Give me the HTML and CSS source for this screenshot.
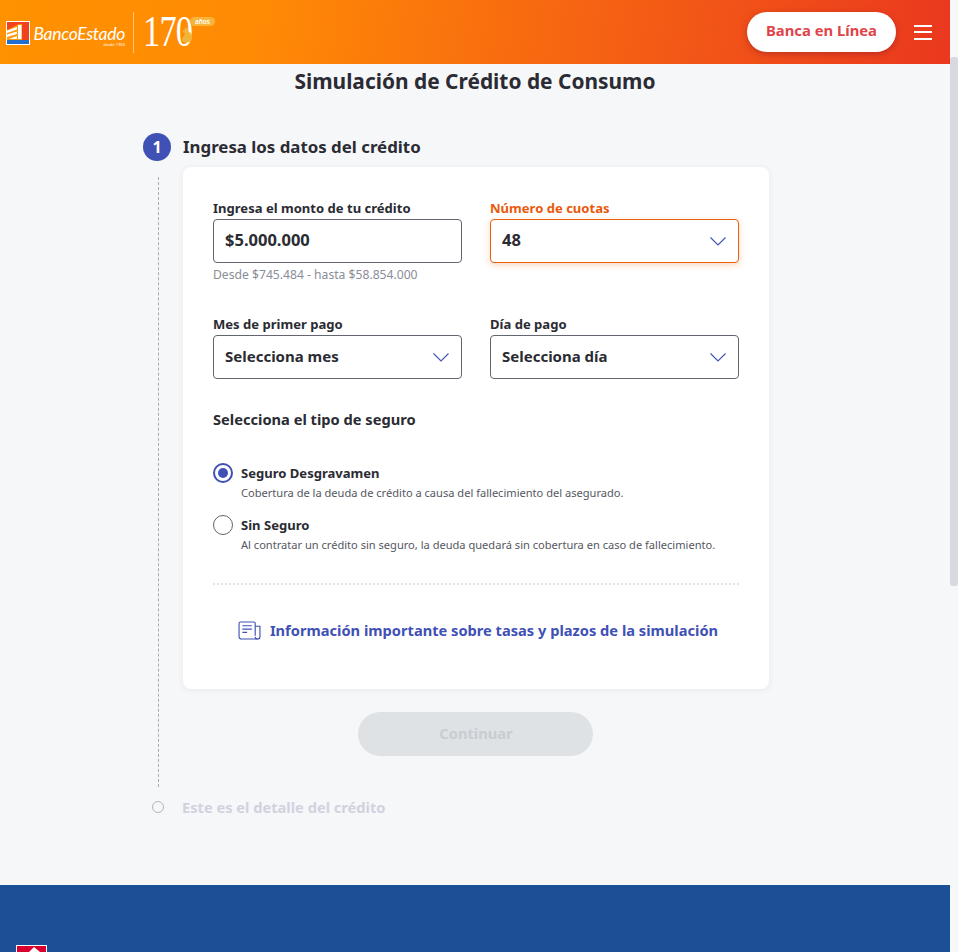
FILE: index.html

```html
<!DOCTYPE html>
<html lang="es">
<head>
    <meta charset="UTF-8">
    <title>Simulación de Crédito de Consumo</title>
    <link rel="stylesheet" href="styles.css">
</head>
<body>
    <div class="page">
        <div class="content">
            <header class="topbar">
                <div class="brand">
                    <svg class="brand-mark" viewBox="0 0 24 24" width="24" height="24">
                        <rect width="24" height="24" fill="#fff"/>
                        <rect x="1" y="1" width="22" height="18" fill="#f0421f"/>
                        <rect x="1" y="19" width="22" height="4" fill="#1f6fd0"/>
                        <path d="M1 9 L13 3 L16 3 L16 19 L1 19 Z" fill="#ff9a10"/>
                        <path d="M1 9.500 L11 6 L11 8.500 L1 12 Z M1 13.500 L11 10.500 L11 13 L1 16 Z M3 18 L11 15 L11 18 Z M12 4 L15.500 4 L15.500 18 L12 18 Z" fill="#fff"/>
                    </svg>
                    <div class="brand-text">
                        <span class="brand-name">BancoEstado</span>
                        <span class="brand-since">desde 1953</span>
                    </div>
                    <span class="brand-line"></span>
                    <span class="years">170</span>
                    <svg class="years-bird" viewBox="0 0 12 16" width="13" height="17">
                        <path d="M5 1 C7 0 8 2 7.500 4 C10 5 12 8 11 11 C10 15 4 16 2 13 C1 11 3 9 4 8 C5 6 4 5 2 5 C3 3 4 2 5 1 Z" fill="#f2b33d"/>
                    </svg>
                    <span class="years-tag">años</span>
                </div>
                <div class="topbar-actions">
                    <a class="btn-online">Banca en Línea</a>
                    <div class="burger"><span></span><span></span><span></span></div>
                </div>
            </header>

            <main class="main">
                <h1 class="title">Simulación de Crédito de Consumo</h1>

                <div class="step-head">
                    <span class="step-num">1</span>
                    <h2>Ingresa los datos del crédito</h2>
                </div>

                <div class="step-body">
                    <section class="card">
                        <div class="form-grid">
                            <div class="field">
                                <label>Ingresa el monto de tu crédito</label>
                                <div class="box num">$5.000.000</div>
                                <small>Desde $745.484 - hasta $58.854.000</small>
                            </div>
                            <div class="field active">
                                <label>Número de cuotas</label>
                                <div class="box num">48
                                    <svg class="chev" viewBox="0 0 16 9" width="16" height="9"><path d="M.5.5 8 8 15.5.5" fill="none" stroke="#3f51b5" stroke-width="1.1"/></svg>
                                </div>
                            </div>
                            <div class="field">
                                <label>Mes de primer pago</label>
                                <div class="box">Selecciona mes
                                    <svg class="chev" viewBox="0 0 16 9" width="16" height="9"><path d="M.5.5 8 8 15.5.5" fill="none" stroke="#3f51b5" stroke-width="1.1"/></svg>
                                </div>
                            </div>
                            <div class="field">
                                <label>Día de pago</label>
                                <div class="box">Selecciona día
                                    <svg class="chev" viewBox="0 0 16 9" width="16" height="9"><path d="M.5.5 8 8 15.5.5" fill="none" stroke="#3f51b5" stroke-width="1.1"/></svg>
                                </div>
                            </div>
                        </div>

                        <h3 class="insurance-title">Selecciona el tipo de seguro</h3>

                        <div class="radio on">
                            <span class="radio-dot"></span>
                            <div>
                                <strong>Seguro Desgravamen</strong>
                                <p>Cobertura de la deuda de crédito a causa del fallecimiento del asegurado.</p>
                            </div>
                        </div>
                        <div class="radio">
                            <span class="radio-dot"></span>
                            <div>
                                <strong>Sin Seguro</strong>
                                <p>Al contratar un crédito sin seguro, la deuda quedará sin cobertura en caso de fallecimiento.</p>
                            </div>
                        </div>

                        <a class="info-link">
                            <svg viewBox="0 0 24 20" width="23" height="19" fill="none" stroke="#3f51b5" stroke-width="1.2">
                                <path d="M18 15.500V2.500A1.500 1.500 0 0 0 16.500 1H2.500A1.500 1.500 0 0 0 1 2.500V16.500A2.500 2.500 0 0 0 3.500 19H20.500A2.500 2.500 0 0 0 23 16.500V5.500H18"/>
                                <path d="M18 16.500A2.500 2.500 0 0 0 20.500 19M4.500 5H14.500M4.500 8.500H14.500M4.500 12H9.500"/>
                            </svg>
                            <span>Información importante sobre tasas y plazos de la simulación</span>
                        </a>
                    </section>
                    <div class="actions"><button class="btn-next">Continuar</button></div>
                </div>

                <div class="step-next">
                    <span class="step-ring"></span>
                    <span>Este es el detalle del crédito</span>
                </div>
            </main>

            <footer class="footer">
                <svg viewBox="0 0 31 31" width="31" height="31">
                    <rect width="31" height="31" fill="#fff"/>
                    <rect x="1" y="1" width="29" height="29" fill="#d9002f"/>
                    <path d="M10 10 L18 2 L24 7 V12 H10 Z" fill="#fff"/>
                </svg>
            </footer>
        </div>
        <div class="scrollbar"><div class="thumb"></div></div>
    </div>
</body>
</html>
```

FILE: styles.css

```css
* {
    box-sizing: border-box;
}
html, body {
    margin: 0;
    height: 952px;
    overflow: hidden;
}
body {
    font-family: "Noto Sans", Arial, sans-serif;
    background: #f6f7f9;
    color: #2b2b33;
}
.page {
    display: flex;
    height: 952px;
}
.content {
    width: 950px;
    flex: none;
}
.scrollbar {
    width: 8px;
    padding-top: 57px;
}
.thumb {
    height: 529px;
    background: #d8d9df;
    border-radius: 3px;
}

/* header */
.topbar {
    height: 64px;
    background: linear-gradient(100deg, #ff9200 0%, #ff8a05 28%, #f45c15 68%, #ea381f 100%);
    display: flex;
    justify-content: space-between;
    align-items: center;
    padding: 0 18px 0 6px;
}
.brand {
    position: relative;
    display: flex;
    align-items: center;
    height: 64px;
    color: #fff;
}
.brand-mark {
    margin-top: 1px;
}
.brand-text {
    width: 103px;
    padding: 7px 8px 0 3px;
    display: flex;
    flex-direction: column;
    align-items: flex-end;
}
.brand-name {
    font-family: Lato, Arial, sans-serif;
    font-style: italic;
    font-size: 17.500px;
    letter-spacing: -.3px;
    line-height: 17px;
    white-space: nowrap;
}
.brand-since {
    font-size: 4px;
    line-height: 5px;
}
.brand-line {
    width: 1px;
    height: 41px;
    background: #ffc27a;
}
.years {
    font-family: "Liberation Serif", serif;
    font-size: 44px;
    letter-spacing: -1px;
    margin-left: 9px;
    line-height: 1;
    width: 52px;
    transform: scaleX(.78);
    transform-origin: left center;
}
.years-bird {
    position: absolute;
    left: 174px;
    top: 27px;
}
.years-tag {
    position: absolute;
    left: 184px;
    top: 17px;
    width: 25px;
    height: 9px;
    border-radius: 5px;
    background: #f5b53a;
    font-size: 6.500px;
    line-height: 9px;
    text-align: center;
    font-weight: 600;
}
.topbar-actions {
    display: flex;
    align-items: center;
    gap: 18px;
}
.btn-online {
    display: block;
    width: 149px;
    height: 40px;
    line-height: 37px;
    text-align: center;
    background: #fff;
    color: #e0444a;
    border-radius: 20px;
    font-size: 14.800px;
    font-weight: 700;
    box-shadow: 0 2px 6px rgba(150,30,40,.55);
}
.burger {
    width: 18px;
    display: flex;
    flex-direction: column;
    gap: 4.500px;
}
.burger span {
    height: 2px;
    background: #fff;
}

/* main */
.main {
    height: 821px;
}
.title {
    margin: 0;
    height: 36px;
    line-height: 35px;
    text-align: center;
    font-size: 20.900px;
    font-weight: 700;
}
.step-head {
    display: flex;
    align-items: center;
    gap: 12px;
    margin: 33px 0 0 143px;
    height: 28px;
}
.step-head h2 {
    margin: 0 0 2px;
    font-size: 16.850px;
    font-weight: 700;
}
.step-num {
    width: 28px;
    height: 28px;
    border-radius: 50%;
    background: #3f51b5;
    color: #fff;
    text-align: center;
    line-height: 28px;
    font-weight: 700;
    font-size: 16px;
}
.step-body {
    position: relative;
    margin: 6px 0 0 183px;
    width: 586px;
}
.step-body::before {
    content: "";
    position: absolute;
    left: -25px;
    top: 10px;
    bottom: -31px;
    border-left: 1px dashed #a9abb3;
}
.card {
    background: #fff;
    border-radius: 8px;
    height: 522px;
    padding: 30px 30px 0;
    box-shadow: 0 1px 6px rgba(40,50,80,.08);
}
.form-grid {
    display: grid;
    grid-template-columns: 249px 249px;
    grid-template-rows: 86px 54px;
    column-gap: 28px;
    row-gap: 30px;
}
.field label {
    display: block;
    font-size: 13.050px;
    font-weight: 700;
    line-height: 22px;
}
.box {
    height: 44px;
    border: 1px solid #63656f;
    border-radius: 4px;
    padding: 0 11px 2px;
    display: flex;
    align-items: center;
    justify-content: space-between;
    font-size: 15px;
    font-weight: 700;
    background: #fff;
}
.box.num {
    font-size: 16.500px;
    padding-bottom: 4px;
}
.box.num .chev {
    margin-top: 4px;
}
.chev {
    margin: 2px 1px 0 0;
}
.field small {
    display: block;
    margin-top: 4px;
    font-size: 12.150px;
    line-height: 16px;
    color: #8a8d98;
}
.field.active label {
    color: #e8590c;
}
.field.active .box {
    border-color: #e8610f;
    box-shadow: 0 2px 6px rgba(240,120,30,.3);
}
.insurance-title {
    margin: 42px 0 0;
    font-size: 14.650px;
    font-weight: 700;
    line-height: 20px;
}
.radio {
    display: flex;
    gap: 8px;
    height: 52px;
}
.insurance-title + .radio {
    margin-top: 34px;
}
.radio-dot {
    flex: none;
    width: 20px;
    height: 20px;
    border-radius: 50%;
    border: 1.500px solid #63656f;
    background: #fff;
}
.radio.on .radio-dot {
    border: 2px solid #3f51b5;
    padding: 3px;
    background: #3f51b5 content-box;
}
.radio strong {
    display: block;
    font-size: 13.050px;
    line-height: 20px;
}
.radio p {
    margin: 0;
    font-size: 11.080px;
    line-height: 20px;
    color: #55575f;
}
.info-link {
    display: flex;
    align-items: center;
    justify-content: center;
    gap: 9px;
    margin-top: 16px;
    padding: 35px 0 0 4px;
    border-top: 2px dotted #e3e4e8;
    color: #3f51b5;
    font-size: 14.650px;
    font-weight: 700;
}
.actions {
    display: flex;
    justify-content: center;
    margin-top: 23px;
    padding-right: 2px;
}
.btn-next {
    width: 235px;
    height: 44px;
    border: none;
    border-radius: 22px;
    background: #dfe2e5;
    color: #c8ccd3;
    padding: 0 0 2px 2px;
    font: 700 14.700px "Noto Sans", Arial, sans-serif;
}
.step-next {
    display: flex;
    align-items: center;
    gap: 18px;
    margin: 41px 0 0 152px;
    height: 20px;
    color: #d0d3de;
    font-size: 14.650px;
    font-weight: 700;
}
.step-ring {
    width: 12px;
    height: 12px;
    border: 1px solid #b5b7bd;
    border-radius: 50%;
}

/* footer */
.footer {
    height: 67px;
    background: #1c5096;
    padding: 60px 0 0 16px;
    overflow: hidden;
}
.footer svg {
    display: block;
}
```
